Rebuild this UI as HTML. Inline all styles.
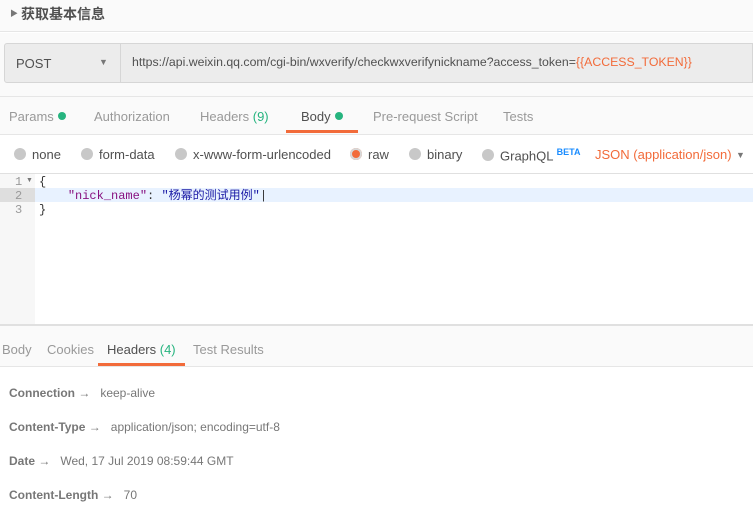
<!DOCTYPE html>
<html><head><meta charset="utf-8"><style>
*{margin:0;padding:0;box-sizing:border-box}
body{width:753px;height:522px;overflow:hidden;background:#fff;font-family:"Liberation Sans","Noto Sans CJK SC",sans-serif;font-size:13px;color:#505050;position:relative}
.a{position:absolute;white-space:nowrap}
.dot{display:inline-block;width:8px;height:8px;border-radius:50%;background:#26b47f;margin-left:4px;vertical-align:1px}
.r{display:inline-block;width:12px;height:12px;border-radius:50%;background:#c8c8c8;vertical-align:-1px;margin-right:6px}
.mono{font-family:"Liberation Mono","Noto Sans CJK SC",monospace;font-size:12px}
.h{font-size:12px;color:#777;line-height:14px}
</style></head><body>
<div class="a" style="left:0;top:0;width:753px;height:32px;background:#fafafa;border-bottom:1px solid #e6e6e6"></div>
<div class="a" style="left:10px;top:8px;font-size:8px;color:#777">▶</div>
<div class="a" style="left:21px;top:4px;font-size:14px;font-weight:bold;color:#505050">获取基本信息</div>
<div class="a" style="left:0;top:33px;width:753px;height:63px;background:#fafafa"></div>
<div class="a" style="left:4px;top:43px;width:117px;height:40px;background:#ececec;border:1px solid #d6d6d6;border-radius:3px 0 0 3px"></div>
<div class="a" style="left:16px;top:56px;font-size:13px;color:#505050">POST</div>
<div class="a" style="left:99px;top:57px;font-size:9px;color:#777">▼</div>
<div class="a" style="left:120px;top:43px;width:633px;height:40px;background:#ececec;border:1px solid #d6d6d6"></div>
<div class="a" style="left:132px;top:55px;font-size:12.3px;color:#505050">https://api.weixin.qq.com/cgi-bin/wxverify/checkwxverifynickname?access_token=<span style="color:#f26b3a">{{ACCESS_TOKEN}}</span></div>
<div class="a" style="left:0;top:96px;width:753px;height:39px;background:#fafafa;border-top:1px solid #e6e6e6;border-bottom:1px solid #e6e6e6"></div>
<div class="a" style="left:9px;top:109px;color:#999">Params<span class="dot"></span></div>
<div class="a" style="left:94px;top:109px;color:#999">Authorization</div>
<div class="a" style="left:200px;top:109px;color:#999">Headers <span style="color:#26b47f">(9)</span></div>
<div class="a" style="left:301px;top:109px;color:#505050">Body<span class="dot"></span></div>
<div class="a" style="left:286px;top:130px;width:72px;height:3px;background:#f26b3a"></div>
<div class="a" style="left:373px;top:109px;color:#999">Pre-request Script</div>
<div class="a" style="left:503px;top:109px;color:#999">Tests</div>
<div class="a" style="left:14px;top:147px;color:#505050"><span class="r"></span>none</div>
<div class="a" style="left:81px;top:147px;color:#505050"><span class="r"></span>form-data</div>
<div class="a" style="left:175px;top:147px;color:#505050"><span class="r"></span>x-www-form-urlencoded</div>
<div class="a" style="left:350px;top:147px;color:#505050"><span class="r" style="background:#f26b3a;box-shadow:inset 0 0 0 2px #d8d8d8"></span>raw</div>
<div class="a" style="left:409px;top:147px;color:#505050"><span class="r"></span>binary</div>
<div class="a" style="left:482px;top:147px;color:#505050"><span class="r"></span>GraphQL <sup style="color:#1a8cff;font-size:9px;font-weight:bold">BETA</sup></div>
<div class="a" style="left:595px;top:147px;color:#f26b3a">JSON (application/json)</div>
<div class="a" style="left:736px;top:150px;font-size:9px;color:#777">▼</div>
<div class="a" style="left:0;top:173px;width:753px;height:1px;background:#e0e0e0"></div>
<div class="a" style="left:0;top:174px;width:35px;height:150px;background:#f7f7f7"></div>
<div class="a" style="left:0;top:188px;width:35px;height:14px;background:#dedede"></div>
<div class="a" style="left:35px;top:188px;width:718px;height:14px;background:#e8f2ff"></div>
<div class="a mono" style="left:15px;top:175px;color:#999;line-height:14px">1<br>2<br>3</div>
<div class="a" style="left:26px;top:177px;font-size:7px;color:#777">▼</div>
<div class="a mono" style="left:39px;top:175px;line-height:14px;color:#333">{<br>&nbsp;&nbsp;&nbsp;&nbsp;<span style="color:#881280">"nick_name"</span>: <span style="color:#1a1aa6">"杨幂的测试用例"</span>|<br>}</div>
<div class="a" style="left:0;top:324px;width:753px;height:43px;background:#fafafa;border-top:2px solid #e0e0e0;border-bottom:1px solid #e6e6e6"></div>
<div class="a" style="left:2px;top:342px;color:#999">Body</div>
<div class="a" style="left:47px;top:342px;color:#999">Cookies</div>
<div class="a" style="left:107px;top:342px;color:#505050">Headers <span style="color:#26b47f">(4)</span></div>
<div class="a" style="left:98px;top:363px;width:87px;height:3px;background:#f26b3a"></div>
<div class="a" style="left:193px;top:342px;color:#999">Test Results</div>
<div class="a h" style="left:9px;top:386px"><b>Connection</b> →&nbsp;&nbsp; keep-alive</div>
<div class="a h" style="left:9px;top:420px"><b>Content-Type</b> →&nbsp;&nbsp; application/json; encoding=utf-8</div>
<div class="a h" style="left:9px;top:454px"><b>Date</b> →&nbsp;&nbsp; Wed, 17 Jul 2019 08:59:44 GMT</div>
<div class="a h" style="left:9px;top:488px"><b>Content-Length</b> →&nbsp;&nbsp; 70</div>
</body></html>
